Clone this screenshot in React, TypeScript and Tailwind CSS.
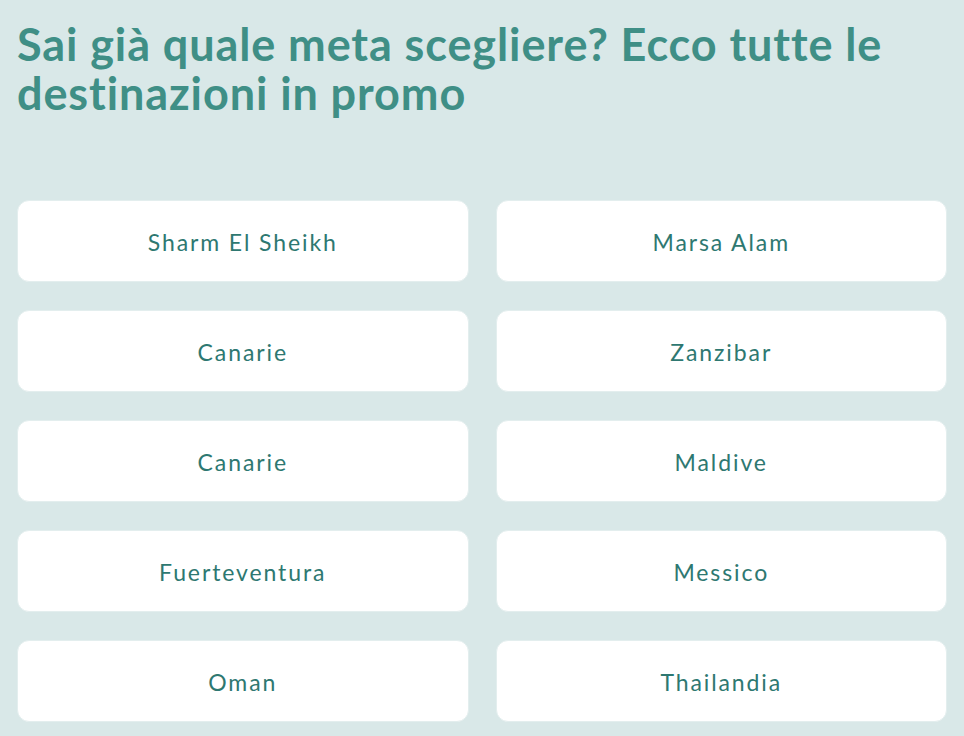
const destinations: [string, string][] = [
  ["Sharm El Sheikh", "Marsa Alam"],
  ["Canarie", "Zanzibar"],
  ["Canarie", "Maldive"],
  ["Fuerteventura", "Messico"],
  ["Oman", "Thailandia"],
];

export default function App() {
  return (
    <div
      className="min-h-[736px] w-full bg-[#d9e8e8] px-[17px] pt-[20px]"
      style={{ fontFamily: "Lato, 'Open Sans', sans-serif" }}
    >
      <h1 className="text-[45px] font-bold leading-[49px] text-[#3f8f86] tracking-[0.9px]">
        Sai già quale meta scegliere? Ecco tutte le destinazioni in promo
      </h1>
      <div className="mt-[82px] grid grid-cols-2 gap-x-[27px] gap-y-[28px]">
        {destinations.flat().map((name, i) => (
          <div
            key={i}
            className="flex h-[82px] items-center justify-center rounded-[12px] border border-[#e3eeee] bg-white pt-[2px] text-[23px] tracking-[1.9px] text-[#2e7871]"
          >
            {name}
          </div>
        ))}
      </div>
    </div>
  );
}
